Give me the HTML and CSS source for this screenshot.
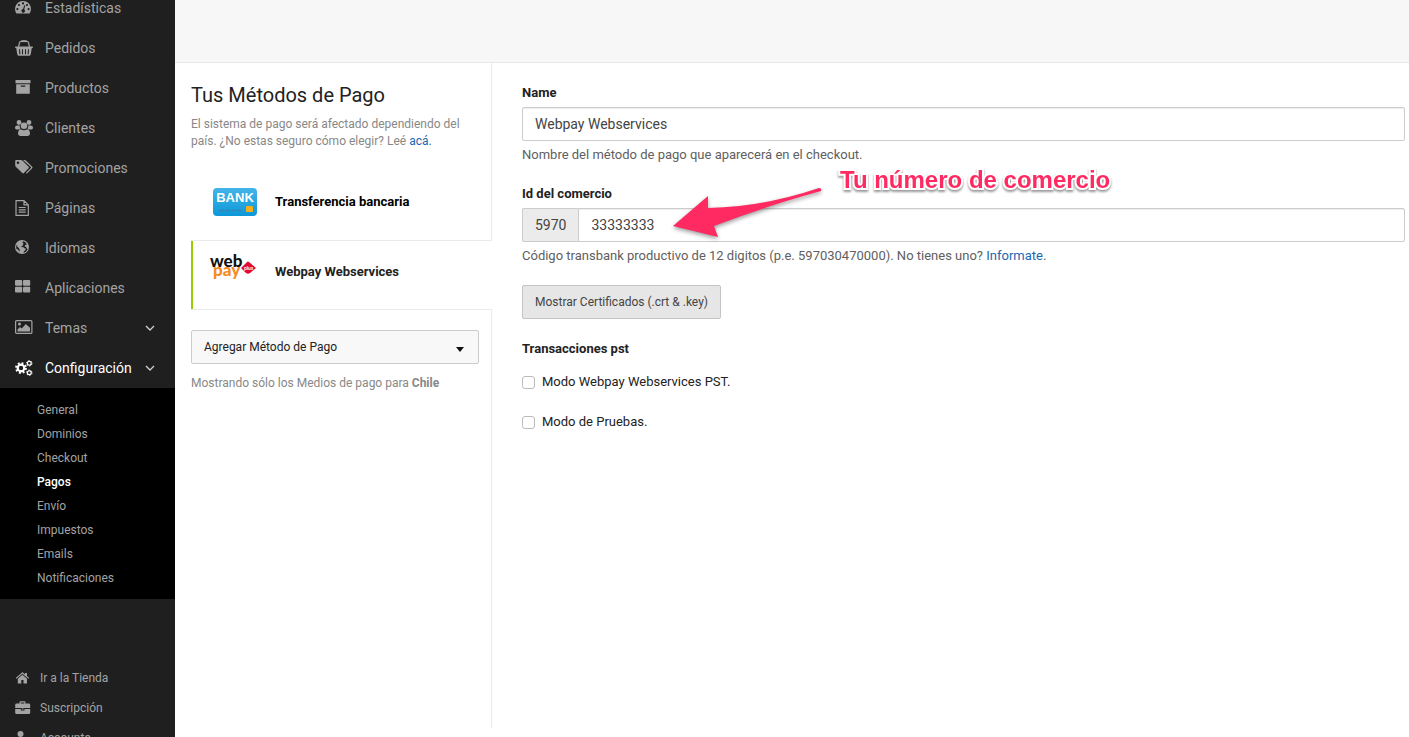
FILE: index.html
```html
<!DOCTYPE html>
<html lang="es">
<head>
<meta charset="utf-8">
<title>Métodos de Pago</title>
<link rel="stylesheet" href="styles.css">
</head>
<body>
<div class="app">
  <aside class="sidebar">
    <nav class="nav">
      <a class="nav-link" href="#">
        <svg class="icon" viewBox="0 0 18 16"><path fill-rule="evenodd" d="M8 1a8 8 0 0 1 6.900 12q-.3.500-.8.500H1.900q-.5 0-.8-.5A8 8 0 0 1 8 1zM8 2.300a1.100 1.100 0 1 0 0 2.200 1.100 1.100 0 0 0 0-2.200zM4 3.900a1.100 1.100 0 1 0 0 2.200 1.100 1.100 0 0 0 0-2.200zM12 3.900a1.100 1.100 0 1 0 0 2.200 1.100 1.100 0 0 0 0-2.200zM2.400 8a1.100 1.100 0 1 0 0 2.200 1.100 1.100 0 0 0 0-2.200zM13.600 8a1.100 1.100 0 1 0 0 2.200 1.100 1.100 0 0 0 0-2.200zM9.200 5.200l-1.100 3.900a1.700 1.700 0 1 0 1.100.3l1-3.900z"/></svg>
        <span>Estadísticas</span></a>
      <a class="nav-link" href="#">
        <svg class="icon" viewBox="0 0 18 16"><path fill="none" stroke="currentColor" stroke-width="1.200" d="M3.500 7l1-4.300Q4.800 1.300 6 1.300h6q1.200 0 1.500 1.400l1 4.300"/><path d="M6.500.200h5v1.900h-5z"/><path fill-rule="evenodd" d="M.700 6.400h16.600q.7 0 .7.800t-.7.800h-.5l-1.100 6.600q-.2 1.100-1.200 1.100h-11q-1 0-1.200-1.100L1.200 8H.700Q0 8 0 7.200t.7-.8zM4 9.200l.4 5h1l-.4-5zM7 9.200v5h1v-5zM10 9.200v5h1v-5zM13 9.200l-.4 5h1l.4-5z"/></svg>
        <span>Pedidos</span></a>
      <a class="nav-link" href="#">
        <svg class="icon" viewBox="0 0 18 16"><path d="M.500 0h15v3.300H.500z"/><path fill-rule="evenodd" d="M1.200 4.200h13.600v9.500H1.200zM6.300 5.600q-.6 0-.6.600t.6.600h3.400q.6 0 .6-.6t-.6-.6z"/></svg>
        <span>Productos</span></a>
      <a class="nav-link" href="#">
        <svg class="icon" viewBox="0 0 18 16"><circle cx="4" cy="2.500" r="2.400"/><circle cx="14" cy="2.500" r="2.400"/><path d="M4.700 5.500H2.300Q0 5.500 0 7.800 0 9.500 1.500 9.500h2.700Q5 8.800 5.400 8.700 4.600 7.300 4.700 5.500zM13.300 5.500h2.400Q18 5.500 18 7.800q0 1.700-1.500 1.700h-2.700q-.8-.7-1.200-.8.800-1.400.7-3.200z"/><circle cx="9" cy="5.800" r="3.300"/><path d="M5.800 9.200q3.200 2 6.400 0Q15 9.700 15 13.600q0 2.400-2.300 2.400H5.300Q3 16 3 13.600q0-3.900 2.800-4.400z"/></svg>
        <span>Clientes</span></a>
      <a class="nav-link" href="#">
        <svg class="icon" viewBox="0 0 18 16"><path fill-rule="evenodd" d="M1.200 0h4.600q1 0 1.800.700l6 6q.8.800 0 1.600l-4.700 4.700q-.8.800-1.600 0L1 7Q.200 6.200.200 5.200V1q0-1 1-1zM3 1.400a1.300 1.300 0 1 0 0 2.600 1.300 1.300 0 0 0 0-2.600z"/><path d="M8 0h1.500q1 0 1.700.700l6 6q.8.800 0 1.600l-4.700 4.700q-.8.800-1.700.1l4.800-4.800q.8-.8 0-1.600z"/></svg>
        <span>Promociones</span></a>
      <a class="nav-link" href="#">
        <svg class="icon" viewBox="0 0 18 16"><path fill="none" stroke="currentColor" stroke-width="1.200" stroke-linejoin="round" d="M1 .600h8l4.300 4.300v10.500H1zM9 .600v4.300h4.300M3.700 7.500h7M3.700 9.800h7M3.700 12.200h7"/></svg>
        <span>Páginas</span></a>
      <a class="nav-link" href="#">
        <svg class="icon" viewBox="0 0 18 16"><path fill-rule="evenodd" d="M7 0a7 7 0 1 1 0 14A7 7 0 0 1 7 0zM8.500 1.200L7.200 2.600l1.500.8-1 .9.800.8-1.600 1-.8 1.100 2-.2 1.200 1.300 1.600.3-.4 1.500-1.300 1-.8 1.600q3-.7 4.200-3.200l-1.300-2.200-1.700-1 .6-1.300 1.700-.5Q10.700 1.800 8.500 1.200zM2 4.300Q.700 6.700 1.500 8.900l1.800.8.600 1.600.7.400V9.300L3.300 7.600 2.200 6.500z"/></svg>
        <span>Idiomas</span></a>
      <a class="nav-link" href="#">
        <svg class="icon" viewBox="0 0 18 16"><rect width="7.200" height="5.800" rx="1"/><rect x="8" width="7.200" height="5.800" rx="1"/><rect y="6.800" width="7.200" height="5.800" rx="1"/><rect x="8" y="6.800" width="7.200" height="5.800" rx="1"/></svg>
        <span>Aplicaciones</span></a>
      <a class="nav-link" href="#">
        <svg class="icon" viewBox="0 0 18 16"><rect x=".600" y=".600" width="16.300" height="12.800" rx="1" fill="none" stroke="currentColor" stroke-width="1.200"/><circle cx="4.500" cy="4" r="1.600"/><path d="M2.500 11.500v-2L5 7l1.700 1.600L10.800 4 15 7.800v3.700z"/></svg>
        <span>Temas</span>
        <svg class="chevron" viewBox="0 0 10 6"><path d="M1 1l4 4 4-4"/></svg></a>
      <a class="nav-link nav-link-active" href="#">
        <svg class="icon" viewBox="0 0 18 16"><circle cx="6" cy="8" r="3.300" fill="none" stroke="currentColor" stroke-width="2.200"/><circle cx="6" cy="8" r="4.900" fill="none" stroke="currentColor" stroke-width="2" stroke-dasharray="1.900 1.948"/><circle cx="14.300" cy="3.300" r="1.900" fill="none" stroke="currentColor" stroke-width="1.200"/><circle cx="14.300" cy="3.300" r="2.700" fill="none" stroke="currentColor" stroke-width="1" stroke-dasharray="1.400 1.427"/><circle cx="14.300" cy="12.700" r="1.900" fill="none" stroke="currentColor" stroke-width="1.200"/><circle cx="14.300" cy="12.700" r="2.700" fill="none" stroke="currentColor" stroke-width="1" stroke-dasharray="1.400 1.427"/></svg>
        <span>Configuración</span>
        <svg class="chevron" viewBox="0 0 10 6"><path d="M1 1l4 4 4-4"/></svg></a>
      <div class="subnav">
        <a class="subnav-link" href="#">General</a>
        <a class="subnav-link" href="#">Dominios</a>
        <a class="subnav-link" href="#">Checkout</a>
        <a class="subnav-link subnav-link-active" href="#">Pagos</a>
        <a class="subnav-link" href="#">Envío</a>
        <a class="subnav-link" href="#">Impuestos</a>
        <a class="subnav-link" href="#">Emails</a>
        <a class="subnav-link" href="#">Notificaciones</a>
      </div>
    </nav>
    <nav class="account-nav">
      <a class="account-link" href="#">
        <svg class="icon-small" viewBox="0 0 16 14"><path d="M7.300 1.300q.2-.2.400 0l2.300 2V2h2v3l2.200 1.900-.8.900-6-5.100L1.500 7.800.700 6.900z"/><path d="M7.400 3.700l4.600 4V12q0 .6-.6.600H8.500V9h-2.200v3.600H3.400q-.6 0-.6-.6V7.700z"/></svg>
        <span>Ir a la Tienda</span></a>
      <a class="account-link" href="#">
        <svg class="icon-small" viewBox="0 0 16 14"><path fill-rule="evenodd" d="M4.500 2.500V1.200q0-1 1-1h4q1 0 1 1v1.300h3.300q1.400 0 1.400 1.300V7H.200V3.800q0-1.300 1.400-1.300zM5.700 1.400v1.100h3.700V1.400z"/><path d="M.200 7.900h5.600v1.500h3.700V7.900h5.700v3.900q0 1.200-1.300 1.200H1.500q-1.300 0-1.300-1.200z"/><path d="M6.700 7.500h1.900v1H6.700z"/></svg>
        <span>Suscripción</span></a>
      <a class="account-link" href="#">
        <svg class="icon-small" viewBox="0 0 16 14"><circle cx="5.500" cy="3" r="3"/><path d="M3 6q2.500 2 5 0 3 .500 3 4.500 0 2-2 2H2q-2 0-2-2Q0 6.500 3 6z"/></svg>
        <span>Accounts</span></a>
    </nav>
  </aside>

  <div class="page">
    <header class="topbar"></header>
    <main class="content">
      <section class="methods">
        <div class="methods-head">
          <h1 class="title">Tus Métodos de Pago</h1>
          <p class="hint">El sistema de pago será afectado dependiendo del país. ¿No estas seguro cómo elegir? Leé <a class="link" href="#">acá.</a></p>
        </div>
        <a class="method" href="#">
          <svg class="method-logo" viewBox="0 0 50 32">
            <defs><linearGradient id="card" x1="0" y1="0" x2="0" y2="1"><stop offset="0" stop-color="#45b4e8"/><stop offset="1" stop-color="#0c98da"/></linearGradient></defs>
            <rect x="3" y="2" width="44" height="28" rx="4" fill="url(#card)"/>
            <text class="bank-text" x="25" y="16" text-anchor="middle">BANK</text>
            <path d="M9 24.500h22" stroke="#3c82a8" stroke-width="1.500" stroke-dasharray="5 1"/>
            <rect x="36" y="20" width="7" height="6" rx="1" fill="#f4ae1d"/>
          </svg>
          <span>Transferencia bancaria</span></a>
        <a class="method method-active" href="#">
          <svg class="method-logo" viewBox="0 0 50 32">
            <text class="pay-text" x="3" y="20">pay</text>
            <text class="web-text" x="0" y="11">web</text>
            <path d="M31 12l6-6q1-1 2 0l7 6-6 5q-2 1.500-4 0z" fill="#e30b2d"/>
            <text class="plus-text" x="34" y="14">plus</text>
          </svg>
          <span>Webpay Webservices</span></a>
        <div class="methods-foot">
          <div class="select-wrap">
            <select class="select" aria-label="Agregar Método de Pago"><option>Agregar Método de Pago</option></select>
            <svg class="caret" viewBox="0 0 8 5"><path d="M0 0h8L4 5z"/></svg>
          </div>
          <p class="hint">Mostrando sólo los Medios de pago para <strong>Chile</strong></p>
        </div>
      </section>

      <form class="form">
        <div class="field">
          <label class="label" for="name">Name</label>
          <input class="input" id="name" type="text" value="Webpay Webservices">
          <p class="help">Nombre del método de pago que aparecerá en el checkout.</p>
        </div>
        <div class="field">
          <label class="label" for="commerce">Id del comercio</label>
          <div class="group">
            <span class="prefix">5970</span>
            <input class="input" id="commerce" type="text" value="33333333">
            <svg class="arrow" viewBox="0 0 160 60"><path d="M5 41L40 11V23Q95 22 151 3Q154 3 153 6Q95 22 46 41L50 52Z"/></svg>
            <strong class="callout">Tu número de comercio</strong>
          </div>
          <p class="help">Código transbank productivo de 12 digitos (p.e. 597030470000). No tienes uno? <a class="link" href="#">Informate</a>.</p>
        </div>
        <button class="button" type="button">Mostrar Certificados (.crt &amp; .key)</button>
        <fieldset class="checks">
          <legend class="label">Transacciones pst</legend>
          <label class="check"><input class="box" type="checkbox"> Modo Webpay Webservices PST.</label>
          <label class="check"><input class="box" type="checkbox"> Modo de Pruebas.</label>
        </fieldset>
      </form>
    </main>
  </div>
</div>
</body>
</html>
```
FILE: styles.css
```css
* { box-sizing: border-box; }

body {
  margin: 0;
  font: 13px/18px Roboto, "Open Sans", sans-serif;
  color: #222;
  background: #fff;
}

a { color: inherit; text-decoration: none; }
p, h1 { margin: 0; }

.app { display: flex; height: 100vh; overflow: hidden; }

.sidebar {
  flex: none;
  width: 175px;
  overflow: hidden;
  background: #1f1f1f;
  color: #a3a3a3;
}
.nav { margin-top: -12px; }
.nav-link {
  display: flex;
  align-items: center;
  height: 40px;
  padding: 0 20px 0 15px;
  font-size: 14px;
}
.nav-link-active { color: #fff; }
.icon { width: 18px; height: 16px; margin-right: 12px; fill: currentColor; }
.chevron {
  width: 10px;
  height: 6px;
  margin-left: auto;
  fill: none;
  stroke: #d0d0d0;
  stroke-width: 1.3;
}

.subnav { padding: 10px 0 9px 37px; background: #000; }
.subnav-link { display: block; font-size: 12px; line-height: 24px; }
.subnav-link-active { color: #fff; font-weight: 500; }

.account-nav { margin-top: 64px; }
.account-link { display: flex; align-items: center; gap: 9px; height: 30px; padding-left: 15px; font-size: 12px; }
.icon-small { width: 16px; height: 14px; fill: currentColor; }

.page { flex: 1; display: flex; flex-direction: column; min-width: 0; }
.topbar { flex: none; height: 63px; background: #f7f7f7; border-bottom: 1px solid #e8e8e8; }
.content { flex: 1; display: flex; min-height: 0; }

.methods { flex: none; display: flex; flex-direction: column; width: 317px; padding: 0 0 9px 16px; }
.methods-head, .methods-foot { border-right: 1px solid #ebebeb; }
.methods-head { padding: 20px 24px 20px 0; }
.methods-foot { flex: 1; padding: 20px 12px 0 0; }
.title { margin-bottom: 9px; font-size: 20px; line-height: 24px; font-weight: 400; }
.hint { font-size: 12px; line-height: 17px; color: #888; }
.link { color: #1a68b0; }

.method {
  display: flex;
  align-items: center;
  height: 70px;
  padding: 0 0 6px 19px;
  gap: 15px;
  border-right: 1px solid #ebebeb;
  font-weight: 700;
  color: #000;
}
.method-logo { width: 50px; height: 32px; overflow: visible; }
.method-active {
  border: solid #ebebeb;
  border-width: 1px 0;
  box-shadow: inset 2px 0 #99cc00;
  color: #222;
}
.bank-text { font: 700 13px "Liberation Sans", sans-serif; fill: #fff; }
.web-text, .pay-text { font: 900 17px Lato, sans-serif; }
.web-text { fill: #111; }
.pay-text { fill: #f68b1f; }
.plus-text { font: 700 5px Lato, sans-serif; fill: #fff; }

.select-wrap { position: relative; margin-bottom: 11px; }
.select {
  appearance: none;
  display: block;
  width: 100%;
  height: 34px;
  padding: 0 12px;
  border: 1px solid #c9cccb;
  border-radius: 2px;
  background: #f8f8f8;
  color: #222;
  font: 12px Roboto, sans-serif;
}
.caret { position: absolute; right: 15px; top: 17px; width: 8px; height: 5px; fill: #111; }

.form { flex: 1; min-width: 0; padding: 20px 4px 0 30px; }
.field { margin-bottom: 20px; }
.label { display: block; margin-bottom: 5px; padding: 0; line-height: 19px; font-weight: 700; }
.input {
  display: block;
  width: 100%;
  height: 34px;
  padding: 0 12px;
  border: 1px solid #ccc;
  border-radius: 2px;
  background: #fff;
  color: #444;
  font: 14px Roboto, sans-serif;
  box-shadow: inset 0 1px 1px #eee;
}
.help { padding-top: 5px; color: #606060; }
.group { position: relative; display: flex; }
.prefix {
  padding: 0 12px;
  border: 1px solid #ccc;
  border-right: 0;
  border-radius: 2px 0 0 2px;
  background: #ebebeb;
  color: #444;
  font-size: 14px;
  line-height: 32px;
}
.group .input { border-radius: 0 2px 2px 0; }
.arrow {
  position: absolute;
  left: 146px;
  top: -23px;
  width: 160px;
  height: 60px;
  fill: #ff2a62;
  filter: drop-shadow(0 2px 2px rgba(0, 0, 0, .4));
}
.callout {
  position: absolute;
  left: 318px;
  top: -42px;
  font: 700 24px/28px "Liberation Sans", sans-serif;
  color: #ff2a62;
  white-space: nowrap;
  paint-order: stroke fill;
  -webkit-text-stroke: 4px #fff;
  filter: drop-shadow(0 2px 1px rgba(0, 0, 0, .4));
}
.button {
  display: block;
  height: 34px;
  padding: 0 12px;
  border: 1px solid #c4c4c4;
  border-radius: 2px;
  background: #e6e6e6;
  color: #444;
  font: 12px Roboto, sans-serif;
}
.checks { margin: 20px 0 0; padding: 0; border: 0; }
.check { display: flex; align-items: center; gap: 7px; height: 40px; }
.checks .label { margin-bottom: 4px; }
.box {
  appearance: none;
  width: 13px;
  height: 13px;
  margin: 0;
  border: 1px solid #bbb;
  border-radius: 3px;
  background: #fff;
}
```
